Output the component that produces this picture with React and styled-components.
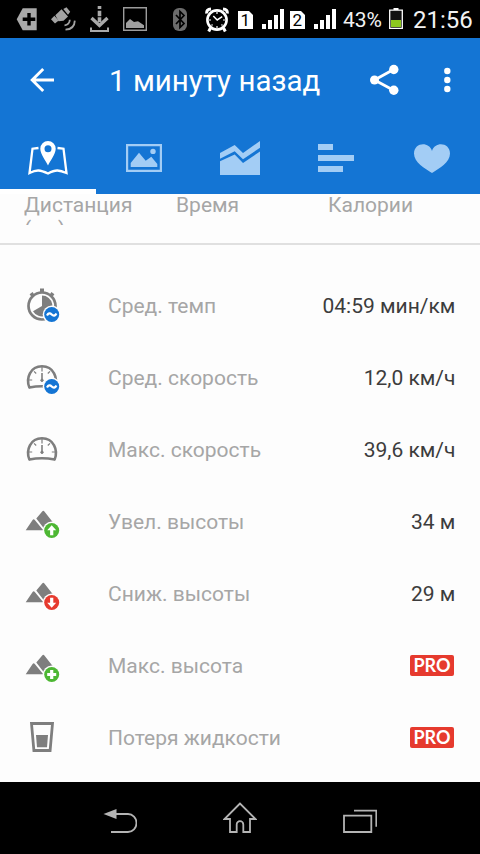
import styled, { createGlobalStyle } from "styled-components";

const BLUE = "#1475d4";
const TAB = "#a3cdf5";
const GRAY = "#7e7e7e";
const GREEN = "#4db733";
const RED = "#e63a2e";

const GlobalStyle = createGlobalStyle`
  * {
    box-sizing: border-box;
  }
  body {
    margin: 0;
    background: #000;
    font-family: Roboto, "Noto Sans", sans-serif;
  }
  svg {
    display: block;
    flex: none;
  }
`;

const Screen = styled.div`
  width: 480px;
  height: 854px;
  display: flex;
  flex-direction: column;
  overflow: hidden;
  background: #fdfdfd;
`;

const StatusBar = styled.div`
  flex: none;
  height: 38px;
  display: flex;
  align-items: center;
  padding-left: 16px;
  background: #000;
  color: #f2f2f2;
  white-space: nowrap;
`;

const StatusIcon = styled.svg.attrs((p) => ({
  width: p.$w,
  height: 38,
  viewBox: `0 0 ${p.$w} 38`,
}))`
  margin-right: ${(p) => p.$gap}px;
`;

const Percent = styled.span`
  width: 46px;
  padding-top: 1px;
  font-size: 21px;
  line-height: 38px;
`;

const Clock = styled.span`
  padding-top: 1px;
  font-size: 24px;
  line-height: 38px;
`;

const Header = styled.header`
  flex: none;
  background: ${BLUE};
`;

const ActionBar = styled.div`
  height: 84px;
  display: flex;
  align-items: center;
  padding-left: 30px;
`;

const Title = styled.h1`
  flex: none;
  margin: 0 0 0 54px;
  width: 261px;
  padding-top: 2px;
  font-size: 29.5px;
  font-weight: 400;
  line-height: 36px;
  color: #fff;
  white-space: nowrap;
`;

const MoreIcon = styled.svg`
  margin-left: 45px;
`;

const Tabs = styled.nav`
  height: 72px;
  display: grid;
  grid-template-columns: repeat(5, 96px);
`;

const Tab = styled.div`
  display: flex;
  align-items: center;
  justify-content: center;
  box-shadow: ${(p) => (p.$active ? "inset 0 -5px 0 #fff" : "none")};
`;

const Summary = styled.div`
  flex: none;
  height: 51px;
  padding-left: 24px;
  border-bottom: 2px solid #e0e0e0;
`;

const SummaryLabels = styled.div`
  height: 31px;
  overflow: hidden;
  display: grid;
  grid-template-columns: repeat(3, 152px);
`;

const SummaryLabel = styled.div`
  margin-top: -1px;
  font-size: 21px;
  line-height: 24px;
  color: #a6a6a6;
`;

const List = styled.div`
  flex: 1;
  padding-top: 25px;
`;

const Row = styled.div`
  height: 72px;
  display: flex;
  align-items: center;
  padding: 0 24px 0 22px;
  font-size: 21px;
  white-space: nowrap;
`;

const Label = styled.span`
  margin-left: 46px;
  color: #a6a6a6;
`;

const Value = styled.span`
  margin: 0 0.6px 0 auto;
  color: #3c3c3c;
`;

const Pro = styled.span`
  margin: 0 2px 2px auto;
  width: 44px;
  height: 21px;
  border-radius: 2px;
  background: ${RED};
  color: #fff;
  font: 700 18px/21px Lato, sans-serif;
  text-align: center;
`;

const NavBar = styled.div`
  flex: none;
  height: 72px;
  display: flex;
  align-items: center;
  justify-content: center;
  gap: 86px;
  background: #000;
`;

const NavIcon = styled.svg.attrs({ width: 34, height: 32, viewBox: "0 0 34 32" })`
  fill: none;
  stroke: #b4b4b4;
  stroke-width: 1.8;
`;

const RowIcon = ({ children }) => (
  <svg width="40" height="40" viewBox="0 0 40 40" fill="none">
    {children}
  </svg>
);

const Badge = ({ color, children }) => (
  <g>
    <circle cx="29.7" cy="28.5" r="9" fill="#fdfdfd" />
    <circle cx="29.7" cy="28.5" r="7.5" fill={color} />
    {children}
  </g>
);

const AverageBadge = () => (
  <Badge color={BLUE}>
    <path d="M25 29.6c1.300-2.600 3-2.800 4.700-1.100s3.400 1.500 4.700-1.100" stroke="#fff" strokeWidth="2.200" />
  </Badge>
);

const Gauge = () => (
  <g stroke={GRAY}>
    <path
      d="M7.400 29.600C3.500 20 8.500 8.300 20 8.300S36.500 20 32.600 29.600C24.500 27.800 15.500 27.800 7.400 29.600Z"
      strokeWidth="2.600"
      strokeLinejoin="round"
    />
    <path d="M20 9v4.500M12 13.300l2.200 2.200M28 13.300l-2.200 2.200M7 22h3.200M33 22h-3.200" strokeWidth="1.200" />
    <path d="M20 15v7" strokeWidth="1.600" />
    <circle cx="20" cy="22.300" r="1.200" fill={GRAY} />
  </g>
);

const Mountains = () => (
  <g fill={GRAY}>
    <path d="M20.200 9.400q1.100-1.400 2.200 0L33 23v5.200h-9.600L14.300 16.600z" />
    <path d="M3.700 28.200L10.600 18q1.100-1.500 2.200 0L21.300 28.200z" />
  </g>
);

const PaceIcon = () => (
  <RowIcon>
    <circle cx="20" cy="20" r="13.500" stroke={GRAY} strokeWidth="2.700" />
    <path d="M18 2.500h4v4h-4zM7.600 8.200l3-2.200 2 3-3 2zM29.400 6l3 2.200-2 2.800-3-2z" fill={GRAY} />
    <path d="M20 20V9.600A10.400 10.400 0 1 1 11 25.200z" fill={GRAY} />
    <AverageBadge />
  </RowIcon>
);

const AvgSpeedIcon = () => (
  <RowIcon>
    <Gauge />
    <AverageBadge />
  </RowIcon>
);

const MaxSpeedIcon = () => (
  <RowIcon>
    <Gauge />
  </RowIcon>
);

const AscentIcon = () => (
  <RowIcon>
    <Mountains />
    <Badge color={GREEN}>
      <path d="M29.700 23.200l4.500 5h-2.900v5h-3.200v-5h-2.900z" fill="#fff" />
    </Badge>
  </RowIcon>
);

const DescentIcon = () => (
  <RowIcon>
    <Mountains />
    <Badge color={RED}>
      <path d="M29.700 33.800l4.500-5h-2.900v-5h-3.200v5h-2.900z" fill="#fff" />
    </Badge>
  </RowIcon>
);

const MaxHeightIcon = () => (
  <RowIcon>
    <Mountains />
    <Badge color={GREEN}>
      <path d="M29.700 24v9M25.200 28.500h9" stroke="#fff" strokeWidth="3.200" />
    </Badge>
  </RowIcon>
);

const GlassIcon = () => (
  <RowIcon>
    <path d="M9.500 5.500h21l-2.400 27H11.900z" stroke={GRAY} strokeWidth="2.800" />
    <path d="M14 17h12l-1 12.300H15z" fill={GRAY} />
  </RowIcon>
);

const Sim = ({ number, gap }) => (
  <StatusIcon $w={15} $gap={gap}>
    <path d="M0 11h11l4 4v14H0z" fill="#fff" />
    <text x="7.300" y="26.300" textAnchor="middle" fontSize="17" fill="#000">
      {number}
    </text>
  </StatusIcon>
);

const Signal = ({ gap }) => (
  <StatusIcon $w={22} $gap={gap} fill="#fff">
    <path d="M0 24h4v5H0zM6 20h4v9H6zM12 15h4v14h-4zM18 9h4v20h-4z" />
  </StatusIcon>
);

const rows = [
  { icon: PaceIcon, label: "Сред. темп", value: "04:59 мин/км" },
  { icon: AvgSpeedIcon, label: "Сред. скорость", value: "12,0 км/ч" },
  { icon: MaxSpeedIcon, label: "Макс. скорость", value: "39,6 км/ч" },
  { icon: AscentIcon, label: "Увел. высоты", value: "34 м" },
  { icon: DescentIcon, label: "Сниж. высоты", value: "29 м" },
  { icon: MaxHeightIcon, label: "Макс. высота" },
  { icon: GlassIcon, label: "Потеря жидкости" },
];

const PhoneStatus = () => (
  <StatusBar>
    <StatusIcon $w={21} $gap={13}>
      <path d="M.7 19.300L6.700 8.300h14v22h-14z" fill="#a9a9a9" />
      <path d="M13 13v12.600M6.700 19.300h12.600" stroke="#000" strokeWidth="3.400" />
    </StatusIcon>
    <StatusIcon $w={27} $gap={13}>
      <g fill="#a3a3a3">
        <path d="M5.300 15.200l6.200-6 6.500 7.200-4.500 4.300-5 .5z" />
        <path d="M13.300 9l3.200-1.700 3.700 4.500-2.200 3zM1 19.300l3.400-3.500 4.300 4.800-3.700 3z" />
      </g>
      <path d="M14.500 25.300q5-.3 5.300-5.500M15.500 29.600q9-.3 9.300-9" fill="none" stroke="#a3a3a3" strokeWidth="1.800" />
    </StatusIcon>
    <StatusIcon $w={19} $gap={14}>
      <path d="M7.700 6h3.600v3H7.700zM7.700 10.700h3.600v5.600H7.700zM7.700 17.300h3.600v5h-3.600z" fill="#a9a9a9" />
      <path d="M1.500 18l8 7.500 8-7.500" fill="none" stroke="#a9a9a9" strokeWidth="3.400" />
      <path d="M1 27.500V31h17v-3.500" fill="none" stroke="#a9a9a9" strokeWidth="2" />
    </StatusIcon>
    <StatusIcon $w={24} $gap={26}>
      <path d="M.7 7.700h22.600v22.600H.7z" fill="none" stroke="#9c9c9c" strokeWidth="1.400" />
      <path d="M3 28v-5l4-4 4 3 4-.8 6 4V28z" fill="#a0a0a0" />
    </StatusIcon>
    <StatusIcon $w={14} $gap={18}>
      <rect y="8" width="14" height="23" rx="6" fill="#6c6c6c" />
      <path d="M3 15l8 8.500-4 4V11.500l4 4L3 24" fill="none" stroke="#000" strokeWidth="1.700" />
    </StatusIcon>
    <StatusIcon $w={24} $gap={9} fill="none" stroke="#fff">
      <path d="M1.800 13.500Q1 9.500 6 9M22.200 13.500Q23 9.500 18 9" strokeWidth="3" />
      <path d="M5.500 28l-1.800 3.500M18.500 28l1.800 3.500" strokeWidth="3" />
      <circle cx="12" cy="20" r="9.600" strokeWidth="2.600" fill="#000" />
      <path d="M8.300 16l3.900 4 5-3.300" strokeWidth="1.500" />
      <path d="M12 12v2M12 26v2M4 20h2M18 20h2M6.500 25.500l1-1M17.500 25.500l-1-1" strokeWidth="1.200" />
    </StatusIcon>
    <Sim number="1" gap={9} />
    <Signal gap={6} />
    <Sim number="2" gap={9} />
    <Signal gap={7} />
    <Percent>43%</Percent>
    <StatusIcon $w={14} $gap={10}>
      <path d="M4.500 8h5v2h-5z" fill="#fff" />
      <path d="M.7 10.200h12.600v18.100H.7z" fill="#111" stroke="#fff" strokeWidth="1.300" />
      <path d="M2 20h10v7H2z" fill="#8cc81e" />
    </StatusIcon>
    <Clock>21:56</Clock>
  </StatusBar>
);

const App = () => {
  return (
    <Screen>
      <GlobalStyle />
      <PhoneStatus />
      <Header>
        <ActionBar>
          <svg width="25" height="26" viewBox="0 0 25 26" fill="none" stroke="#fff" strokeWidth="2.900">
            <path d="M24 13H2.500M13.200 2L2.200 13l11 11" />
          </svg>
          <Title>1 минуту назад</Title>
          <svg width="29" height="32" viewBox="0 0 29 32" fill="#fff">
            <path d="M24 5.300L4.500 16 24 26.500" fill="none" stroke="#fff" strokeWidth="2.800" />
            <circle cx="4.500" cy="16" r="4.500" />
            <circle cx="23.800" cy="5.500" r="4.700" />
            <circle cx="23.800" cy="26.300" r="4.700" />
          </svg>
          <MoreIcon width="7" height="26" viewBox="0 0 7 26" fill="#fff">
            <circle cx="3.300" cy="4" r="3.200" />
            <circle cx="3.300" cy="13" r="3.200" />
            <circle cx="3.300" cy="22" r="3.200" />
          </MoreIcon>
        </ActionBar>
        <Tabs>
          <Tab $active>
            <svg width="44" height="44" viewBox="0 0 44 44">
              <path
                d="M12.500 12L6.500 12.700 3.500 37Q9 34.300 12.500 34.500T22 37.500Q28 34.300 31.500 34.500T40.500 37L37.500 12.700 31.500 12"
                fill="none"
                stroke="#fff"
                strokeWidth="2.300"
              />
              <path
                fillRule="evenodd"
                d="M22 29.500C20 25 14.300 18 14.300 12.700a7.700 7.700 0 0 1 15.400 0C29.700 18 24 25 22 29.500zM22 9.200a3.500 3.500 0 1 0 0 7 3.500 3.500 0 0 0 0-7z"
                fill="#fff"
              />
            </svg>
          </Tab>
          <Tab>
            <svg width="36" height="28" viewBox="0 0 36 28" fill={TAB}>
              <path d="M1.100 1.100h33.800v25.800H1.100z" fill="none" stroke={TAB} strokeWidth="2.200" />
              <path d="M4.700 23v-4L13 8.700l6.700 8 5.600-4 6 7.300v3z" />
              <circle cx="27" cy="7.400" r="2.700" />
            </svg>
          </Tab>
          <Tab>
            <svg width="40" height="34" viewBox="0 0 40 34" fill={TAB}>
              <path d="M0 12L14.700 4l8.300 8L40 0v6.700L23 18.300l-8.300-8L0 17.700z" />
              <path d="M0 20.300l14.700-6.800L23 22l17-11.500V34H0z" />
            </svg>
          </Tab>
          <Tab>
            <svg width="36" height="28" viewBox="0 0 36 28" fill={TAB}>
              <path d="M0 0h15v6H0zM0 11h36v6H0zM0 22h25v6H0z" />
            </svg>
          </Tab>
          <Tab>
            <svg width="36" height="29" viewBox="0 0 36 29" fill={TAB}>
              <path d="M18 29C11 24.500 0 18.500 0 9.500 0-1.500 15-3 18 7 21-3 36-1.500 36 9.500c0 9-11 15-18 19.500z" />
            </svg>
          </Tab>
        </Tabs>
      </Header>
      <Summary>
        <SummaryLabels>
          <SummaryLabel>
            Дистанция
            <br />
            (км)
          </SummaryLabel>
          <SummaryLabel>Время</SummaryLabel>
          <SummaryLabel>Калории</SummaryLabel>
        </SummaryLabels>
      </Summary>
      <List>
        {rows.map(({ icon: Icon, label, value }) => (
          <Row key={label}>
            <Icon />
            <Label>{label}</Label>
            {value ? <Value>{value}</Value> : <Pro>PRO</Pro>}
          </Row>
        ))}
      </List>
      <NavBar>
        <NavIcon>
          <path d="M.5 12L13.500 7v10z" fill="#b4b4b4" stroke="none" />
          <path d="M13 12h12a8.500 9 0 0 1 0 18H8" />
        </NavIcon>
        <NavIcon>
          <path d="M17 1.500L1.500 17H7v13h6.700v-7.500a3.300 3.300 0 0 1 6.600 0V30H27V17h5.500z" />
        </NavIcon>
        <NavIcon>
          <path d="M1 13.700h27.300V30H1zM11 8.700h22.300v16" />
        </NavIcon>
      </NavBar>
    </Screen>
  );
};

export default App;
